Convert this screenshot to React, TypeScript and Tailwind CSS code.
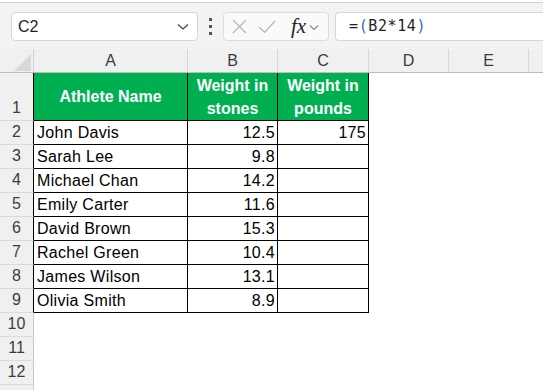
import React from "react";

const F = { fontFamily: '"Liberation Sans", Arial, sans-serif' };

const rows: [string, string, string][] = [
  ["John Davis", "12.5", "175"],
  ["Sarah Lee", "9.8", ""],
  ["Michael Chan", "14.2", ""],
  ["Emily Carter", "11.6", ""],
  ["David Brown", "15.3", ""],
  ["Rachel Green", "10.4", ""],
  ["James Wilson", "13.1", ""],
  ["Olivia Smith", "8.9", ""],
];

function RowHead({ n, h, black }: { n?: number; h: string; black?: boolean }) {
  return (
    <div
      className={`w-[34px] shrink-0 ${h} flex items-end justify-center pb-[1px] border-b border-b-[#dadada] border-r ${
        black ? "border-r-black" : "border-r-[#c8c8c8]"
      } bg-[#f0f0f0] text-[16px] text-[#3c3c3c] leading-[22px]`}
    >
      {n}
    </div>
  );
}

export default function App() {
  return (
    <div className="w-[543px] h-[390px] overflow-hidden bg-white" style={F}>
      {/* ribbon bottom */}
      <div className="h-[3px] bg-white border-b border-[#d4d4d4]" />
      {/* formula bar */}
      <div className="h-[46px] bg-[#f3f3f3] flex items-start pt-[9px]">
        <div className="ml-[11px] w-[187px] h-[29px] bg-white border border-[#d6d6d6] rounded-[4px] flex items-center pl-[6px] pr-[8px]">
          <span className="text-[16px] text-[#1f1f1f] flex-1">C2</span>
          <svg width="12" height="8" viewBox="0 0 12 8">
            <path d="M1 1.5 L6 6 L11 1.5" fill="none" stroke="#444" strokeWidth="1.3" />
          </svg>
        </div>
        <div className="w-[25px] h-[29px] flex flex-col items-center justify-center gap-[4px]">
          <div className="w-[3px] h-[3px] bg-[#555]" />
          <div className="w-[3px] h-[3px] bg-[#555]" />
          <div className="w-[3px] h-[3px] bg-[#555]" />
        </div>
        <div className="w-[106px] h-[29px] bg-[#fafafa] border border-[#dcdcdc] rounded-[4px] flex items-center pl-[8px]">
          <svg width="15" height="15" viewBox="0 0 15 15">
            <path d="M1 1 L14 14 M14 1 L1 14" stroke="#b4b4b4" strokeWidth="1.2" />
          </svg>
          <svg width="18" height="14" viewBox="0 0 18 14" className="ml-[11px]">
            <path d="M1 7 L6.5 12.5 L17 1" fill="none" stroke="#b4b4b4" strokeWidth="1.2" />
          </svg>
          <span
            className="ml-[15px] text-[21px] italic text-[#222] leading-none"
            style={{ fontFamily: '"Liberation Serif", "Times New Roman", serif' }}
          >
            fx
          </span>
          <svg width="10" height="7" viewBox="0 0 10 7" className="ml-[3px] mt-[2px]">
            <path d="M1 1.5 L5 5.5 L9 1.5" fill="none" stroke="#888" strokeWidth="1.1" />
          </svg>
        </div>
        <div
          className="ml-[6px] flex-1 h-[29px] bg-white border border-[#d6d6d6] border-r-0 rounded-l-[4px] flex items-center pl-[13px] text-[15px] tracking-[0.6px] text-[#1f1f1f]"
          style={{ fontFamily: '"DejaVu Sans Mono", monospace' }}
        >
          =<span className="text-[#1f6fc5]">(</span>B2*14<span className="text-[#1f6fc5]">)</span>
        </div>
      </div>
      {/* column headers */}
      <div className="flex h-[24px] bg-[#f0f0f0] border-b border-[#bdbdbd] text-[16px] text-[#3c3c3c]">
        <div className="w-[34px] shrink-0 relative border-r border-[#d0d0d0]">
          <svg width="17" height="17" viewBox="0 0 17 17" className="absolute left-[14px] top-[5px]">
            <path d="M17 0 L17 17 L0 17 Z" fill="#d9d9d9" />
          </svg>
        </div>
        <div className="w-[154px] shrink-0 border-r border-[#d6d6d6] flex items-center justify-center">A</div>
        <div className="w-[90px] shrink-0 border-r border-[#d6d6d6] flex items-center justify-center">B</div>
        <div className="w-[91px] shrink-0 border-r border-[#d6d6d6] flex items-center justify-center">C</div>
        <div className="w-[80px] shrink-0 border-r border-[#d6d6d6] flex items-center justify-center">D</div>
        <div className="w-[80px] shrink-0 border-r border-[#d6d6d6] flex items-center justify-center">E</div>
        <div className="flex-1" />
      </div>
      {/* row 1 */}
      <div className="flex h-[48px]">
        <RowHead n={1} h="h-[48px]" black />
        <div className="w-[154px] shrink-0 bg-[#00b050] border-r border-b border-black flex items-center justify-center text-white font-bold text-[16px]">
          Athlete Name
        </div>
        <div className="w-[90px] shrink-0 bg-[#00b050] border-r border-b border-black flex flex-col items-center justify-center text-white font-bold text-[16px] leading-[23px]">
          <span>Weight in</span>
          <span>stones</span>
        </div>
        <div className="w-[91px] shrink-0 bg-[#00b050] border-r border-b border-black flex flex-col items-center justify-center text-white font-bold text-[16px] leading-[23px]">
          <span>Weight in</span>
          <span>pounds</span>
        </div>
        <div className="flex-1" />
      </div>
      {rows.map((r, i) => (
        <div key={i} className="flex h-[24px]">
          <RowHead n={i + 2} h="h-[24px]" black />
          <div className="w-[154px] shrink-0 border-r border-b border-black flex items-center pl-[3px] text-[16px] tracking-[0.3px] text-black">
            {r[0]}
          </div>
          <div className="w-[90px] shrink-0 border-r border-b border-black flex items-center justify-end pr-[2px] text-[16px] tracking-[0.3px] text-black">
            {r[1]}
          </div>
          <div className="w-[91px] shrink-0 border-r border-b border-black flex items-center justify-end pr-[2px] text-[16px] tracking-[0.3px] text-black">
            {r[2]}
          </div>
          <div className="flex-1" />
        </div>
      ))}
      {[10, 11, 12].map((n) => (
        <div key={n} className="flex h-[24px]">
          <RowHead n={n} h="h-[24px]" />
          <div className="flex-1" />
        </div>
      ))}
      <div className="flex h-[24px]">
        <RowHead h="h-[24px]" />
        <div className="flex-1" />
      </div>
    </div>
  );
}
